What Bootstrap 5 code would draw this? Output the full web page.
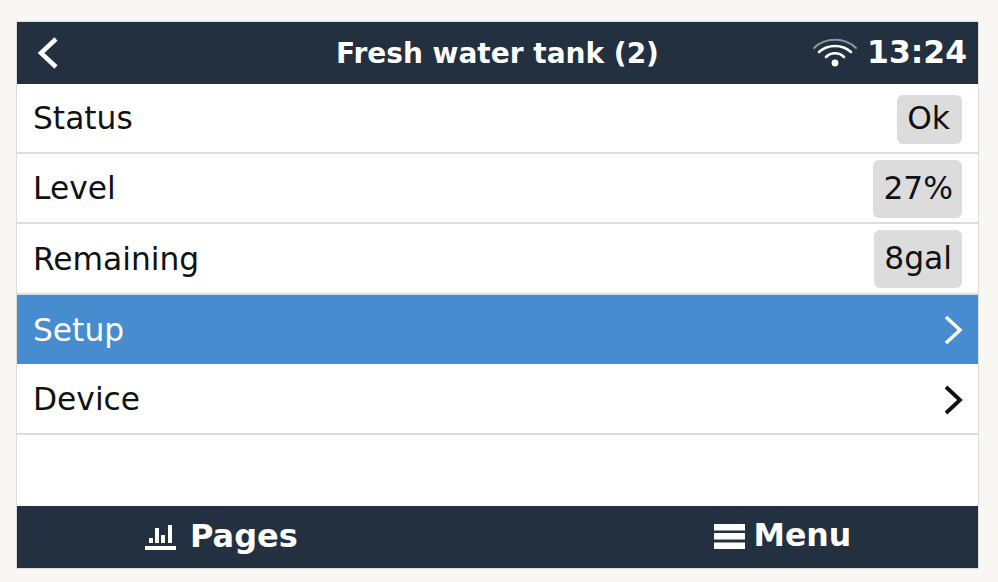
<!doctype html>
<html lang="en">
<head>
<meta charset="utf-8">
<title>Fresh water tank (2)</title>
<link href="https://cdn.jsdelivr.net/npm/bootstrap@5.3.0/dist/css/bootstrap.min.css" rel="stylesheet">
<style>
html,body{height:582px;overflow:hidden}
body{background:#f9f7f3;font-family:"DejaVu Sans",sans-serif;color:#111;padding:21px 19px 13px 16px}
.gx-screen{height:548px;border:1px solid #dcdcd8;background:#fff}
.gx-head{height:62px;background:#22303f;color:#fff;padding:0 11px 0 19px}
.gx-title{font-size:28px;font-weight:700;left:0;right:0;text-align:center;top:11px}
.gx-clock{font-size:31.4px;font-weight:700;margin-left:9px}
.gx-row{font-size:31.3px;padding:1px 15px 0 16px;border-bottom:2px solid #dcdcdc;height:70px}
.gx-row.gx-sel{background:#468ccf;color:#fff;border-bottom:0;height:69px}
.gx-row.gx-pre{height:71px}
.gx-val{background:#dcdcdc;border-radius:6px;margin-right:1px;height:49px;line-height:47px;padding:0 12px 0 10px}
.gx-low{margin-top:2px}
.gx-tall{height:58px;line-height:56px;padding:0 9px 0 10px}
.gx-wide{padding:0 10px}
.gx-foot{height:62px;background:#22303f;color:#fff;font-size:32px;font-weight:700;margin-top:auto}
.gx-foot>div{flex:1 1 50%}
.gx-pages{padding-left:128px}
.gx-menu{padding-left:216px}
.gx-menu span{font-size:31.6px}
.gx-gap-l{margin-right:14px}
.gx-gap-r{margin-right:9px}
.gx-foot span{margin-top:-2px}
.gx-drop{margin-top:1px}
</style>
</head>
<body>
<div class="gx-screen d-flex flex-column">
  <div class="gx-head d-flex align-items-center position-relative flex-shrink-0">
    <svg width="24" height="32" viewBox="0 0 24 32" aria-hidden="true"><path d="M20 2 5 16l15 14" fill="none" stroke="#fff" stroke-width="4.5"/></svg>
    <div class="gx-title position-absolute">Fresh water tank (2)</div>
    <div class="ms-auto d-flex align-items-center">
      <svg width="46" height="34" viewBox="0 0 46 34" aria-hidden="true" fill="none" stroke-linecap="round">
        <path d="M2 12C13 1 33 1 44 12" stroke="#8d96a0" stroke-width="2"/>
        <path d="M7 16C16 8 30 8 39 16" stroke="#fff" stroke-width="2.6"/>
        <path d="M14 21C19 16 27 16 32 21" stroke="#fff" stroke-width="2.6"/>
        <circle cx="23" cy="27" r="3.4" fill="#fff"/>
      </svg>
      <span class="gx-clock">13:24</span>
    </div>
  </div>
  <div class="gx-row d-flex align-items-center justify-content-between flex-shrink-0"><span>Status</span><span class="gx-val gx-low">Ok</span></div>
  <div class="gx-row d-flex align-items-center justify-content-between flex-shrink-0"><span>Level</span><span class="gx-val gx-tall">27%</span></div>
  <div class="gx-row gx-pre d-flex align-items-center justify-content-between flex-shrink-0"><span>Remaining</span><span class="gx-val gx-tall gx-wide">8gal</span></div>
  <div class="gx-row gx-sel d-flex align-items-center justify-content-between flex-shrink-0"><span>Setup</span>
    <svg width="20" height="30" viewBox="0 0 20 30" aria-hidden="true"><path d="M3 2l14 13L3 28" fill="none" stroke="#fff" stroke-width="3.5"/></svg></div>
  <div class="gx-row gx-pre d-flex align-items-center justify-content-between flex-shrink-0"><span>Device</span>
    <svg class="gx-drop" width="20" height="30" viewBox="0 0 20 30" aria-hidden="true"><path d="M3 2l14 13L3 28" fill="none" stroke="#111" stroke-width="3.8"/></svg></div>
  <div class="gx-foot d-flex align-items-center">
    <div class="gx-pages d-flex align-items-center">
      <svg class="gx-gap-l" width="31" height="25" viewBox="0 0 31 25" aria-hidden="true" fill="#fff"><rect y="21" width="31" height="4"/><rect x="4" y="13" width="4" height="5"/><rect x="10" y="3" width="4" height="15"/><rect x="16" y="10" width="4" height="8"/><rect x="23" y="0" width="4" height="18"/></svg>
      <span>Pages</span>
    </div>
    <div class="gx-menu d-flex align-items-center">
      <svg class="gx-gap-r" width="31" height="25" viewBox="0 0 31 25" aria-hidden="true" fill="#fff"><rect y="0" width="31" height="6.5"/><rect y="9" width="31" height="6.5"/><rect y="18.5" width="31" height="6.5"/></svg>
      <span>Menu</span>
    </div>
  </div>
</div>
</body>
</html>
